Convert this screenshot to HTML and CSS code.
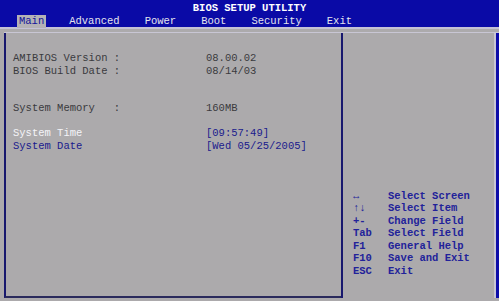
FILE: index.html
```html
<!DOCTYPE html>
<html lang="en">
<head>
    <meta charset="UTF-8">
    <meta name="viewport" content="width=device-width, initial-scale=1.0">
    <title>BIOS Setup Utility</title>
    <link rel="stylesheet" href="styles.css">
</head>
<body>

<div class="header">
    <div class="title">BIOS SETUP UTILITY</div>
    <div class="menu">
        <span class="tab active">Main</span>
        <span class="tab">Advanced</span>
        <span class="tab">Power</span>
        <span class="tab">Boot</span>
        <span class="tab">Security</span>
        <span class="tab">Exit</span>
    </div>
</div>

<div class="body">
    <div class="frame">
        <div class="left">
            <div class="row"><span class="label">AMIBIOS Version :</span><span>08.00.02</span></div>
            <div class="row"><span class="label">BIOS Build Date :</span><span>08/14/03</span></div>
            <div class="row"></div>
            <div class="row"></div>
            <div class="row"><span class="label">System Memory   :</span><span>160MB</span></div>
            <div class="row"></div>
            <div class="row"><span class="label selected">System Time</span><span class="blue">[09:57:49]</span></div>
            <div class="row"><span class="label blue">System Date</span><span class="blue">[Wed 05/25/2005]</span></div>
        </div>
        <div class="right">
            <!-- key help -->
            <div class="help">
                <div class="row"><span class="key">&harr;</span><span>Select Screen</span></div>
                <div class="row"><span class="key">&uarr;&darr;</span><span>Select Item</span></div>
                <div class="row"><span class="key">+-</span><span>Change Field</span></div>
                <div class="row"><span class="key">Tab</span><span>Select Field</span></div>
                <div class="row"><span class="key">F1</span><span>General Help</span></div>
                <div class="row"><span class="key">F10</span><span>Save and Exit</span></div>
                <div class="row"><span class="key">ESC</span><span>Exit</span></div>
            </div>
        </div>
    </div>
</div>

</body>
</html>
```

FILE: styles.css
```css
body {
    margin: 0;
    width: 499px;
    height: 301px;
    overflow: hidden;
    background-color: #acaaac;
    font-family: "Liberation Mono", "DejaVu Sans Mono", monospace;
    font-size: 10.5px;
    color: #3a3a3e;
}
.header {
    height: 29px;
    background-color: #0a0aa6;
    border-bottom: 2px solid #c4c2d6;
    box-sizing: border-box;
}
.title {
    height: 14px;
    line-height: 17px;
    text-align: center;
    font-weight: bold;
    color: #ffffff;
}
.menu {
    display: flex;
    gap: 21px;
    padding-left: 17px;
    padding-top: 1px;
}
.tab {
    padding: 0 2px;
    height: 13px;
    line-height: 13px;
    color: #e4e4ee;
}
.tab.active {
    background-color: #b4b2b6;
    color: #12129a;
}
.body {
    padding: 3px 0 0 4px;
}
.frame {
    display: flex;
    height: 265px;
    border-top: 1px solid #c8c6d4;
}
.left {
    width: 328px;
    border-left: 2px solid #18186e;
    border-bottom: 2px solid #2a2a5c;
    padding: 19px 0 0 7px;
}
.row {
    display: flex;
    height: 12.5px;
    line-height: 12.5px;
    white-space: pre;
}
.label {
    width: 193px;
}
.selected {
    color: #f4f4f8;
}
.blue {
    color: #1a1a8c;
}
.right {
    flex: 1;
    display: flex;
    flex-direction: column;
    justify-content: flex-end;
    border-left: 2px solid #18186e;
    border-right: 3px solid #0c0ca8;
    box-shadow: inset -2px 0 0 #c8c6d4;
    padding: 0 0 21px 10px;
}
.help {
    font-weight: bold;
    color: #22229a;
}
.key {
    width: 35px;
}
```
